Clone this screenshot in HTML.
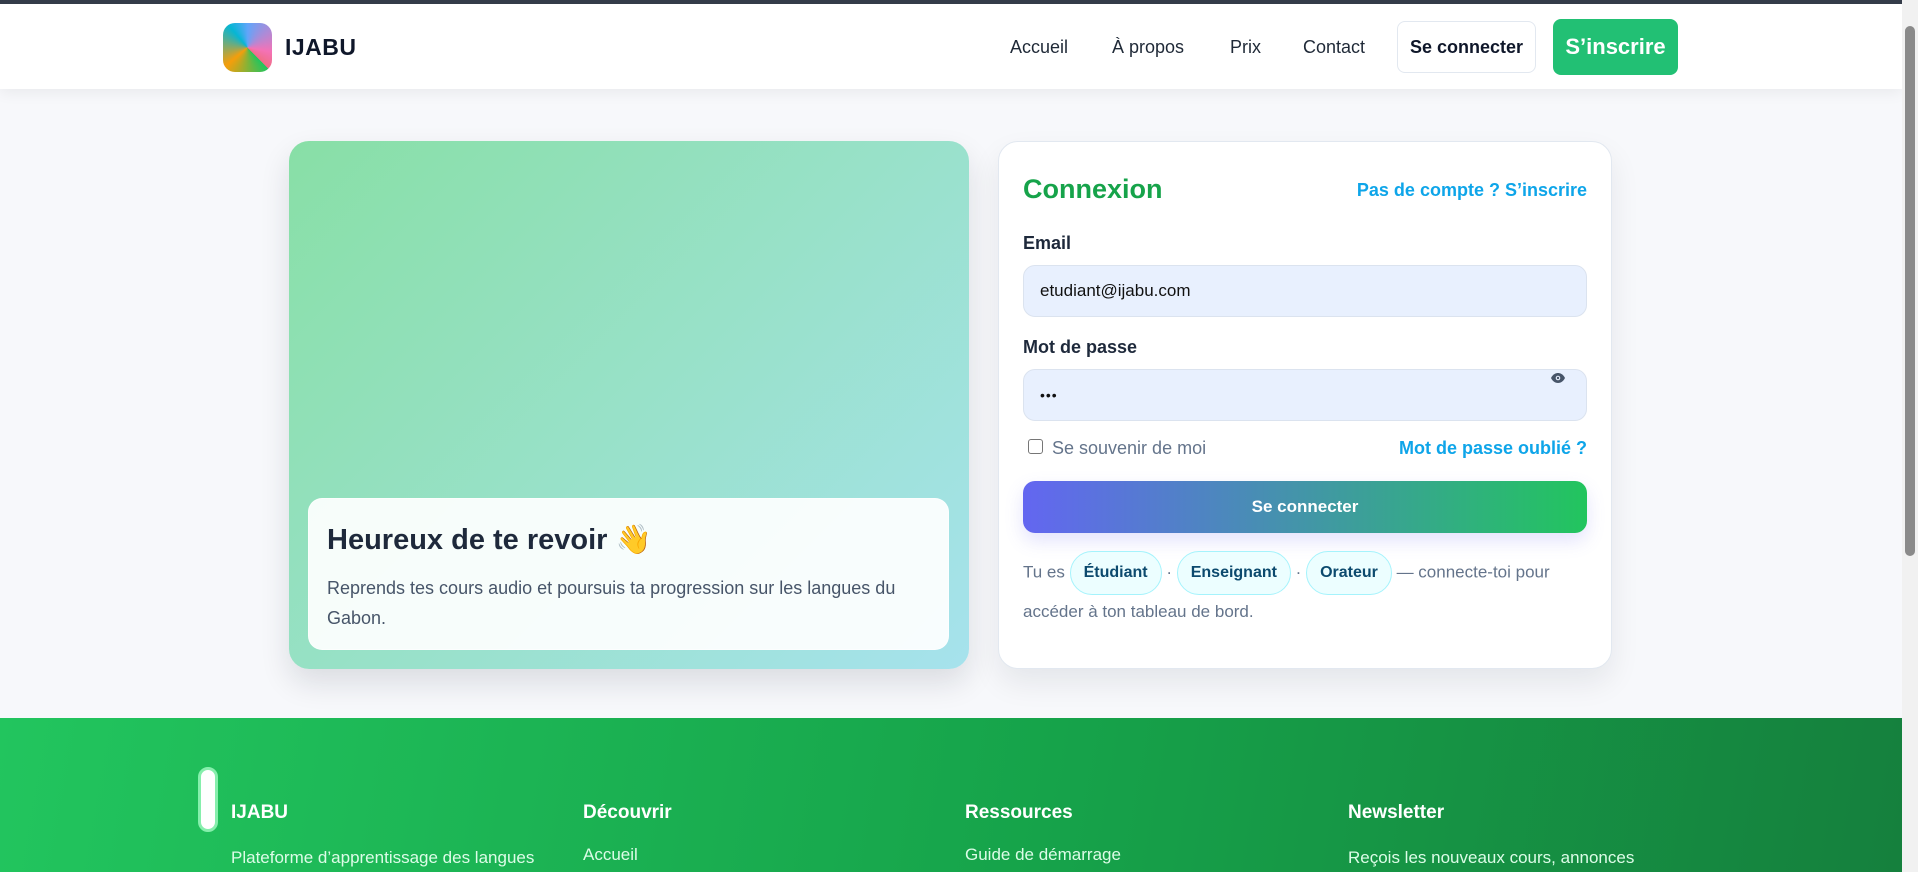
<!DOCTYPE html>
<html><head><meta charset="utf-8"><style>
*{box-sizing:border-box;margin:0;padding:0}
body{width:1918px;height:872px;overflow:hidden;background:#f7f8fb;font-family:"Liberation Sans",Arial,sans-serif;position:relative;color:#0f172a}
.a{position:absolute}
.topbar{left:0;top:0;width:1918px;height:4px;background:#353d4a}
.header{left:0;top:4px;width:1902px;height:85px;background:#fff;box-shadow:0 4px 14px rgba(0,0,0,.06)}
.logo{left:223px;top:23px;width:49px;height:49px;border-radius:12px;background:conic-gradient(from 0deg at 50% 50%,#60a5fa 0deg,#f472b6 100deg,#f06e86 135deg,#22c55e 136deg,#f59e0b 230deg,#06b6d4 320deg,#60a5fa 360deg)}
.brand{left:285px;top:34px;font-size:23px;font-weight:bold;color:#0f172a;letter-spacing:.5px}
.nav{top:37px;font-size:18px;color:#1f2937}
.btn1{left:1397px;top:21px;width:139px;height:52px;border:1px solid #e2e8f0;border-radius:8px;background:#fff;font-size:18px;font-weight:bold;display:flex;align-items:center;justify-content:center;color:#0f172a}
.btn2{left:1553px;top:19px;width:125px;height:56px;border-radius:8px;background:#22c074;font-size:22px;font-weight:bold;color:#fff;display:flex;align-items:center;justify-content:center}
.scroll{left:1902px;top:0;width:16px;height:872px;background:#f1f1f1}
.thumb{left:1905px;top:26px;width:10px;height:530px;background:#8a8a8a;border-radius:5px}
.left{left:289px;top:141px;width:680px;height:528px;border-radius:20px;background:linear-gradient(135deg,#88dfa6 0%,#98e1c8 50%,#a6e2ed 100%);box-shadow:0 14px 30px rgba(15,23,42,.12)}
.inner{left:308px;top:498px;width:641px;height:152px;border-radius:14px;background:rgba(255,255,255,.92);border:1px solid rgba(255,255,255,.6)}
.inner h2{position:absolute;left:18px;top:24px;font-size:29px;font-weight:bold;color:#1e293b}
.inner p{position:absolute;left:18px;top:74px;width:600px;font-size:18px;line-height:30px;color:#475569}
.card{left:998px;top:141px;width:614px;height:528px;border-radius:20px;background:#fff;border:1px solid #e2e8f0;box-shadow:0 14px 30px rgba(15,23,42,.08)}
.lbl{font-size:18px;font-weight:bold;color:#1e293b}
.inp{left:1023px;width:564px;height:52px;border-radius:12px;background:#e8f0fe;border:1px solid #dbe3ef;font-size:17px;padding-left:16px;display:flex;align-items:center;color:#111}
.link{font-size:18px;font-weight:bold;color:#0ea5e9}
.sub{left:1023px;top:481px;width:564px;height:52px;border-radius:12px;background:linear-gradient(90deg,#6366f1,#22c55e);color:#fff;font-size:17px;font-weight:bold;display:flex;align-items:center;justify-content:center;box-shadow:0 8px 18px rgba(99,102,241,.18)}
.roles{left:1023px;top:551px;width:570px;font-size:17px;color:#64748b;line-height:34px}
.pill{display:inline-block;padding:0 13px;height:44px;line-height:42px;border-radius:22px;background:#ecfeff;border:1px solid #a5f3fc;color:#0c4a6e;font-weight:bold;font-size:16px;vertical-align:middle}
.footer{left:0;top:718px;width:1902px;height:154px;background:linear-gradient(100deg,#22c55e 0%,#16a34a 55%,#15803d 100%)}
.fh{top:802px;font-size:19px;font-weight:bold;color:#fff}
.fl{top:845px;font-size:17px;color:#dcfce7}
</style></head><body>
<div class="a topbar"></div>
<div class="a header"></div>
<div class="a logo"></div>
<div class="a brand">IJABU</div>
<div class="a nav" style="left:1010px">Accueil</div>
<div class="a nav" style="left:1112px">À propos</div>
<div class="a nav" style="left:1230px">Prix</div>
<div class="a nav" style="left:1303px">Contact</div>
<div class="a btn1">Se connecter</div>
<div class="a btn2">S’inscrire</div>

<div class="a left"></div>
<div class="a inner"><h2>Heureux de te revoir 👋</h2><p>Reprends tes cours audio et poursuis ta progression sur les langues du Gabon.</p></div>

<div class="a card"></div>
<div class="a" style="left:1023px;top:174px;font-size:27px;font-weight:bold;color:#16a34a">Connexion</div>
<div class="a link" style="right:331px;top:180px">Pas de compte ? S’inscrire</div>
<div class="a lbl" style="left:1023px;top:233px">Email</div>
<div class="a inp" style="top:265px">etudiant@ijabu.com</div>
<div class="a lbl" style="left:1023px;top:337px">Mot de passe</div>
<div class="a inp" style="top:369px;font-size:14px;letter-spacing:1px">•••</div>
<svg class="a" style="left:1550px;top:372px" width="16" height="12" viewBox="0 0 16 12"><path d="M1 6C3 2 6 1 8 1s5 1 7 5c-2 4-5 5-7 5S3 10 1 6z" fill="#475569"/><circle cx="8" cy="6" r="2.3" fill="#e8f0fe"/><circle cx="8" cy="6" r="1.2" fill="#475569"/></svg>
<div class="a" style="left:1028px;top:439px;width:15px;height:15px;border:1.5px solid #767676;border-radius:3px;background:#fff"></div>
<div class="a" style="left:1052px;top:438px;font-size:18px;color:#64748b">Se souvenir de moi</div>
<div class="a link" style="right:331px;top:438px">Mot de passe oublié ?</div>
<div class="a sub">Se connecter</div>
<div class="a roles">Tu es <span class="pill">Étudiant</span> · <span class="pill">Enseignant</span> · <span class="pill">Orateur</span> — connecte-toi pour accéder à ton tableau de bord.</div>

<div class="a footer"></div>
<div class="a" style="left:198px;top:767px;width:20px;height:65px;border-radius:10px;background:#fff;border:3px solid #86efac"></div>
<div class="a fh" style="left:231px">IJABU</div>
<div class="a fh" style="left:583px">Découvrir</div>
<div class="a fh" style="left:965px">Ressources</div>
<div class="a fh" style="left:1348px">Newsletter</div>
<div class="a fl" style="left:231px;top:848px">Plateforme d’apprentissage des langues</div>
<div class="a fl" style="left:583px">Accueil</div>
<div class="a fl" style="left:965px">Guide de démarrage</div>
<div class="a fl" style="left:1348px;top:848px">Reçois les nouveaux cours, annonces</div>

<div class="a scroll"></div>
<div class="a thumb"></div>
</body></html>
